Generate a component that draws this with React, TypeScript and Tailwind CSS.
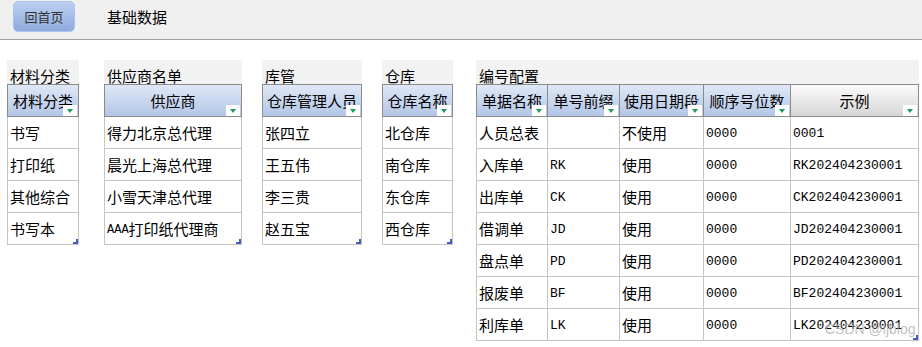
import React from "react"

type Col = { label: string; w: string; mono?: boolean; plain?: boolean }

const cjk = "font-['Noto_Sans_CJK_SC',sans-serif]"
const mono = "font-['Liberation_Mono','Noto_Sans_CJK_SC',monospace]"

function Dropdown() {
  return (
    <span className="absolute right-[1px] bottom-0 z-10 flex h-[11px] w-[14px] items-center justify-center bg-white">
      <span className="h-0 w-0 border-t-[4px] border-r-[3px] border-l-[3px] border-t-[#1f9a60] border-r-transparent border-l-transparent" />
    </span>
  )
}

function Handle() {
  return (
    <svg className="absolute right-0 bottom-0" width="5" height="5" viewBox="0 0 5 5">
      <polygon points="3,0 5,0 5,5 0,5 0,3 3,3" fill="#3f5fbf" />
    </svg>
  )
}

function Sheet({ title, cols, rows, className }: { title: string; cols: Col[]; rows: string[][]; className: string }) {
  return (
    <div className={className}>
      {/* title row */}
      <div className="flex h-[24px] items-end bg-[#f2f2f2] pb-[1px] pl-[3px] text-[15px] leading-[15px] text-black">{title}</div>

      {/* header */}
      <div className="flex h-[33px] border-t border-b border-[#8a8a8a]">
        {cols.map((c, i) => (
          <div
            key={c.label}
            className={`${c.w} relative flex h-full items-center justify-center overflow-hidden whitespace-nowrap border-r border-[#8a8a8a] pt-[1px] text-[15px] ${
              i === 0 ? "border-l" : ""
            } ${c.plain ? "bg-linear-to-b from-[#fbfbfb] to-[#d6d6d6]" : "bg-linear-to-b from-[#dfe8f6] to-[#b3c6e7]"}`}
          >
            <span className="shrink-0">{c.label}</span>
            <Dropdown />
          </div>
        ))}
      </div>

      {/* body */}
      {rows.map((r, ri) => (
        <div key={ri} className="flex h-[32px] border-b border-[#c4c4c4]">
          {r.map((v, ci) => (
            <div
              key={ci}
              className={`${cols[ci].w} relative flex h-full items-center overflow-hidden whitespace-nowrap border-r border-[#c4c4c4] pt-[2px] pl-[2px] ${
                ci === 0 ? "border-l" : ""
              } ${cols[ci].mono ? `${mono} text-[13px]` : "text-[15px]"}`}
            >
              {v.startsWith("AAA") ? (
                <>
                  <span className={`${mono} text-[12px]`}>AAA</span>
                  {v.slice(3)}
                </>
              ) : (
                v
              )}
              {ri === rows.length - 1 && ci === r.length - 1 && <Handle />}
            </div>
          ))}
        </div>
      ))}
    </div>
  )
}

export default function App() {
  const codes = [
    ["人员总表", "", "不使用", "0000", "0001"],
    ["入库单", "RK", "使用", "0000", "RK202404230001"],
    ["出库单", "CK", "使用", "0000", "CK202404230001"],
    ["借调单", "JD", "使用", "0000", "JD202404230001"],
    ["盘点单", "PD", "使用", "0000", "PD202404230001"],
    ["报废单", "BF", "使用", "0000", "BF202404230001"],
    ["利库单", "LK", "使用", "0000", "LK202404230001"],
  ]

  return (
    <div className={`relative h-[347px] w-[922px] overflow-hidden bg-white text-black ${cjk}`}>
      {/* top bar */}
      <div className="flex h-[40px] items-start border-b border-[#a0a0a0] bg-[#f0f0f0]">
        <button className="mt-[1px] ml-[13px] flex h-[31px] w-[62px] items-center justify-center rounded-[5px] border border-[#a9c4ee] bg-linear-to-b from-[#bccff0] to-[#8eaadc] text-[13px] text-[#333]">
          回首页
        </button>
        <span className="mt-[8px] ml-[32px] text-[15px] leading-[18px]">基础数据</span>
      </div>

      {/* sheets */}
      <div className="flex items-start pt-[20px] pl-[7px]">
        <Sheet
          className="w-[72px]"
          title="材料分类"
          cols={[{ label: "材料分类", w: "w-[72px]" }]}
          rows={[["书写"], ["打印纸"], ["其他综合"], ["书写本"]]}
        />
        <Sheet
          className="ml-[25px] w-[138px]"
          title="供应商名单"
          cols={[{ label: "供应商", w: "w-[138px]" }]}
          rows={[["得力北京总代理"], ["晨光上海总代理"], ["小雪天津总代理"], ["AAA打印纸代理商"]]}
        />
        <Sheet
          className="ml-[20px] w-[100px]"
          title="库管"
          cols={[{ label: "仓库管理人员", w: "w-[100px]" }]}
          rows={[["张四立"], ["王五伟"], ["李三贵"], ["赵五宝"]]}
        />
        <Sheet
          className="ml-[20px] w-[71px]"
          title="仓库"
          cols={[{ label: "仓库名称", w: "w-[71px]" }]}
          rows={[["北仓库"], ["南仓库"], ["东仓库"], ["西仓库"]]}
        />
        <Sheet
          className="ml-[23px] w-[443px]"
          title="编号配置"
          cols={[
            { label: "单据名称", w: "w-[72px]" },
            { label: "单号前缀", w: "w-[72px]", mono: true },
            { label: "使用日期段", w: "w-[84px]" },
            { label: "顺序号位数", w: "w-[87px]", mono: true },
            { label: "示例", w: "w-[128px]", mono: true, plain: true },
          ]}
          rows={codes}
        />
      </div>

      {/* watermark */}
      <span className="pointer-events-none absolute top-[319px] left-[825px] whitespace-nowrap font-['Liberation_Sans',sans-serif] text-[14px] text-[#b0b0b0]/80">
        CSDN @ljblog
      </span>
    </div>
  )
}
